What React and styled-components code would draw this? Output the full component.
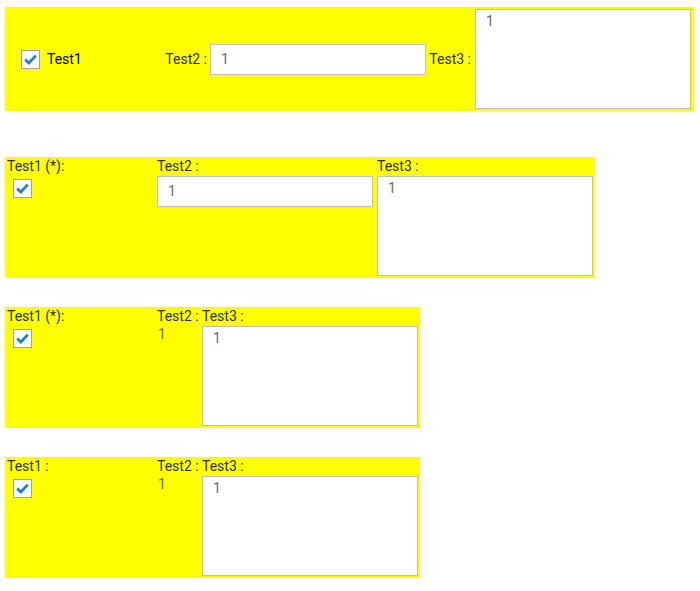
import React from 'react';
import styled, { createGlobalStyle } from 'styled-components';

const GlobalStyle = createGlobalStyle`
  html, body {
    margin: 0;
    padding: 0;
    background: #fff;
    font-family: Roboto, "Liberation Sans", sans-serif;
    font-size: 14px;
  }
`;

const Page = styled.div`
  padding: 7px 5px;
  display: flex;
  flex-direction: column;
  align-items: flex-start;
`;

const InlineForm = styled.div`
  display: flex;
  align-items: center;
  width: 689px;
  background: #ffff00;
  margin-bottom: 46px;
`;

const StackedForm = styled.div`
  display: flex;
  align-items: stretch;
  background: #ffff00;
  margin-bottom: 29px;
`;

const InlineCell = styled.div`
  display: flex;
  align-items: center;
  box-sizing: border-box;
  width: ${(p) => p.$width}px;
  justify-content: ${(p) => (p.$end ? 'flex-end' : 'flex-start')};
  gap: ${(p) => p.$gap || 0}px;
  padding-left: ${(p) => p.$padLeft || 0}px;
  padding-right: ${(p) => p.$padRight || 0}px;
`;

const Column = styled.div`
  display: flex;
  flex-direction: column;
  box-sizing: border-box;
  width: ${(p) => p.$width}px;
  padding-left: ${(p) => p.$padLeft || 0}px;
`;

const Label = styled.span`
  display: block;
  height: 19px;
  line-height: 19px;
  color: #2b3340;
  white-space: nowrap;
`;

const CheckText = styled.span`
  color: #000;
`;

const Box = styled.span`
  display: inline-flex;
  box-sizing: border-box;
  width: 19px;
  height: 19px;
  background: #fff;
  border: 1px solid #a3a3a3;
  margin: ${(p) => p.$margin || '0'};
  flex: none;
`;

const Input = styled.div`
  box-sizing: border-box;
  width: 216px;
  height: 31px;
  background: #fff;
  border: 1px solid #c0bfcc;
  padding: 0 10px;
  line-height: 29px;
  color: #6a6a6a;
`;

const TextArea = styled.div`
  box-sizing: border-box;
  width: 216px;
  height: 100px;
  background: #fff;
  border: 1px solid #bdbdbd;
  padding: 3px 10px;
  line-height: 17px;
  color: #6a6a6a;
  margin: ${(p) => p.$margin || '0'};
`;

const Value = styled.span`
  display: block;
  line-height: 17px;
  padding-left: 1px;
  color: #6b6b3a;
`;

const Checkbox = ({ margin }) => (
  <Box $margin={margin}>
    <svg width="17" height="17" viewBox="0 0 17 17">
      <path
        d="M3.2 8.6 L6.8 12 L13.8 4.6"
        fill="none"
        stroke="#1b7fd8"
        strokeWidth="2.8"
      />
    </svg>
  </Box>
);

const Stacked = ({ title, inputField }) => (
  <StackedForm>
    <Column $width={152} $padLeft={2}>
      <Label>{title}</Label>
      <Checkbox margin="3px 0 0 6px" />
    </Column>
    {inputField ? (
      <Column $width={220}>
        <Label>Test2 :</Label>
        <Input>1</Input>
      </Column>
    ) : (
      <Column $width={45}>
        <Label>Test2 :</Label>
        <Value>1</Value>
      </Column>
    )}
    <Column $width={218}>
      <Label>Test3 :</Label>
      <TextArea $margin="0 0 2px 0">1</TextArea>
    </Column>
  </StackedForm>
);

export default function App() {
  return (
    <>
      <GlobalStyle />
      <Page>
        <InlineForm>
          <InlineCell $width={152} $padLeft={16} $gap={7}>
            <Checkbox />
            <CheckText>Test1</CheckText>
          </InlineCell>
          <InlineCell $width={269} $end $gap={3}>
            <Label as="span">Test2 :</Label>
            <Input>1</Input>
          </InlineCell>
          <InlineCell $width={268} $end $gap={4} $padRight={3}>
            <Label as="span">Test3 :</Label>
            <TextArea $margin="2px 0">1</TextArea>
          </InlineCell>
        </InlineForm>
        <Stacked title="Test1 (*):" inputField />
        <Stacked title="Test1 (*):" />
        <Stacked title="Test1 :" />
      </Page>
    </>
  );
}
